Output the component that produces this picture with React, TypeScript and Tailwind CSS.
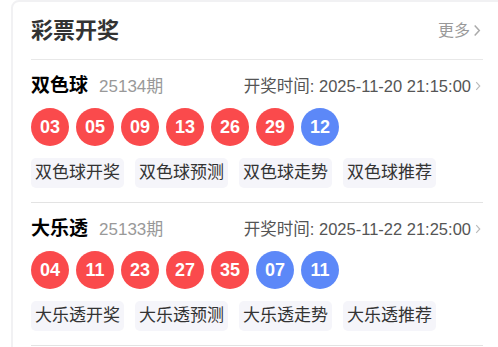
const draws = [
  {
    name: "双色球",
    issue: "25134期",
    time: "2025-11-20 21:15:00",
    red: ["03", "05", "09", "13", "26", "29"],
    blue: ["12"],
  },
  {
    name: "大乐透",
    issue: "25133期",
    time: "2025-11-22 21:25:00",
    red: ["04", "11", "23", "27", "35"],
    blue: ["07", "11"],
  },
];

const links = ["开奖", "预测", "走势", "推荐"];

function Chevron({ className }: { className?: string }) {
  return (
    <svg viewBox="0 0 8 14" className={className} fill="none" stroke="currentColor" strokeWidth="1.6">
      <path d="M1.5 1.5 L6.5 7 L1.5 12.5" />
    </svg>
  );
}

function Ball({ num, blue }: { num: string; blue?: boolean }) {
  return (
    <div
      className={
        blue
          ? "w-[38px] h-[38px] rounded-full bg-[#5c88f8] text-white font-bold text-[18px] flex items-center justify-center"
          : "w-[38px] h-[38px] rounded-full bg-[#fa4a4c] text-white font-bold text-[18px] flex items-center justify-center"
      }
    >
      {num}
    </div>
  );
}

export default function App() {
  return (
    <div className="bg-white w-[498px] h-[347px] overflow-hidden pl-[11px] font-['Liberation_Sans','Noto_Sans_CJK_SC',sans-serif]">
      <div className="w-[520px] border-2 border-[#f1f1f3] rounded-lg pl-[18px] pb-4">
        <div className="w-[452px]">
          <div className="h-[58px] flex items-center justify-between border-b border-[#e8e8e8]">
            <h3 className="font-bold text-[22px] text-[#333]">彩票开奖</h3>
            <div className="flex items-center text-[16px] text-[#999] mr-[2px]">
              更多
              <Chevron className="w-[8px] h-[13px] ml-[3px] text-[#aaa]" />
            </div>
          </div>

          {draws.map((d) => (
            <div key={d.name} className="pt-[14px] pb-[14px] border-b border-[#e3e3e3]">
              <div className="h-[24px] flex items-center justify-between">
                <div className="flex items-baseline">
                  <span className="font-bold text-[19px] text-black">{d.name}</span>
                  <span className="text-[17px] text-[#999] ml-[11px]">{d.issue}</span>
                </div>
                <div className="flex items-center text-[16.5px] text-[#555]">
                  开奖时间: {d.time}
                  <Chevron className="w-[6px] h-[10px] ml-[4px] mr-[2px] text-[#bbb]" />
                </div>
              </div>
              <div className="flex gap-[7px] mt-[10px]">
                {d.red.map((n, i) => (
                  <Ball key={"r" + i} num={n} />
                ))}
                {d.blue.map((n, i) => (
                  <Ball key={"b" + i} num={n} blue />
                ))}
              </div>
              <div className="flex gap-[11px] mt-[12px]">
                {links.map((l) => (
                  <div key={l} className="h-[30px] px-[4px] rounded-[5px] bg-[#f5f5fa] text-[17px] text-[#333] flex items-center">
                    {d.name + l}
                  </div>
                ))}
              </div>
            </div>
          ))}
        </div>
      </div>
    </div>
  );
}
